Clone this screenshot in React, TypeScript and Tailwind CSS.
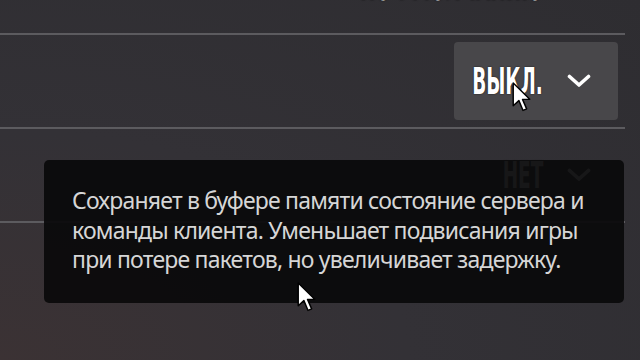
import React from 'react'

const HEAD_FONT = { fontFamily: '"DejaVu Sans Condensed", "DejaVu Sans", sans-serif' }
const BODY_FONT = { fontFamily: '"Noto Sans", "Open Sans", sans-serif' }

function Chevron() {
  return (
    <svg width="24" height="14" viewBox="0 0 24 14" className="shrink-0">
      <path d="M2.5 2.5 L12 11 L21.5 2.5" fill="none" stroke="white" strokeWidth="3.6" strokeLinecap="round" strokeLinejoin="round" />
    </svg>
  )
}

function Cursor({ x, y }: { x: number; y: number }) {
  return (
    <svg
      width="20"
      height="31"
      viewBox="0 0 19 30"
      className="absolute pointer-events-none"
      style={{ left: x - 1, top: y - 1 }}
    >
      <path
        d="M1 1 L1 23 L6.5 18 L10.5 27.5 L14 26 L10 16.8 L17 16.8 Z"
        fill="white"
        stroke="black"
        strokeWidth="1.4"
        strokeLinejoin="round"
      />
    </svg>
  )
}

function Value({ label }: { label: string }) {
  return (
    <div className="flex items-center justify-end gap-6">
      <span
        className="inline-block origin-right scale-x-[0.54] text-[38px] leading-none font-bold text-white whitespace-nowrap [text-shadow:0_0_2px_rgba(0,0,0,0.9)]"
        style={HEAD_FONT}
      >
        {label}
      </span>
      <Chevron />
    </div>
  )
}

function Row({ children, last }: { children?: React.ReactNode; last?: boolean }) {
  return (
    <div className={`h-[94px] flex items-center justify-end ${last ? '' : 'border-b-2 border-[#5c5b5f]'}`}>
      {children}
    </div>
  )
}

export default function App() {
  return (
    <div className="relative w-[640px] h-[360px] overflow-hidden bg-[radial-gradient(ellipse_at_0%_100%,#3b3234_0%,#333136_45%,#2e2d31_100%)]">
      <div className="w-[625px] -mt-[59px]">
        <Row>
          <div className="pr-[34px]">
            <Value label="ПО УМОЛЧАНИЮ" />
          </div>
        </Row>
        <Row>
          <div className="mr-[7px] w-[164px] h-[78px] rounded-[4px] bg-[#48474a] flex items-center justify-end pr-[27px]">
            <Value label="ВЫКЛ." />
          </div>
        </Row>
        <Row>
          <div className="pr-[34px]">
            <Value label="НЕТ" />
          </div>
        </Row>
        <Row last />
      </div>

      <Cursor x={513} y={83} />

      {/* подсказка поверх списка */}
      <div className="absolute left-[44px] top-[160px] w-[580px] h-[143px] rounded-[5px] bg-[#0b0b0c]/[0.95] pl-[28px] pt-[26px]">
        <p
          className="text-[23px] leading-[29.5px] text-[#d6d6d6] whitespace-nowrap tracking-[-0.8px]"
          style={BODY_FONT}
        >
          Сохраняет в буфере памяти состояние сервера и
          <br />
          команды клиента. Уменьшает подвисания игры
          <br />
          при потере пакетов, но увеличивает задержку.
        </p>
      </div>

      <Cursor x={298} y={283} />
    </div>
  )
}
